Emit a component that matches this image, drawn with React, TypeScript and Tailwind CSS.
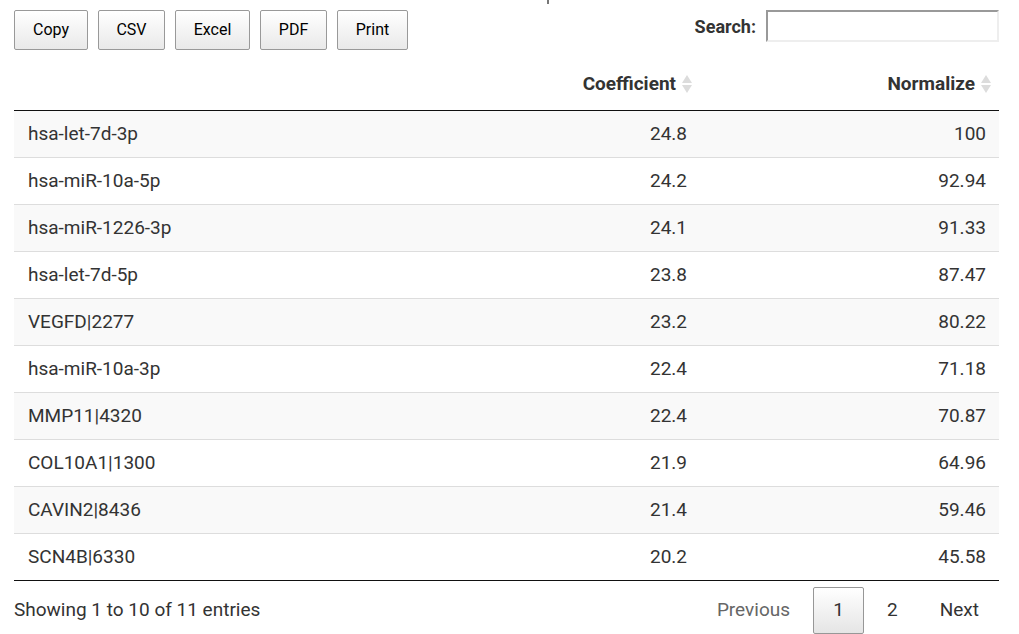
const rows = [
  { name: "hsa-let-7d-3p", coef: "24.8", norm: "100" },
  { name: "hsa-miR-10a-5p", coef: "24.2", norm: "92.94" },
  { name: "hsa-miR-1226-3p", coef: "24.1", norm: "91.33" },
  { name: "hsa-let-7d-5p", coef: "23.8", norm: "87.47" },
  { name: "VEGFD|2277", coef: "23.2", norm: "80.22" },
  { name: "hsa-miR-10a-3p", coef: "22.4", norm: "71.18" },
  { name: "MMP11|4320", coef: "22.4", norm: "70.87" },
  { name: "COL10A1|1300", coef: "21.9", norm: "64.96" },
  { name: "CAVIN2|8436", coef: "21.4", norm: "59.46" },
  { name: "SCN4B|6330", coef: "20.2", norm: "45.58" },
];

const buttons = [
  { label: "Copy", w: "w-[74px]" },
  { label: "CSV", w: "w-[67px]" },
  { label: "Excel", w: "w-[75px]" },
  { label: "PDF", w: "w-[67px]" },
  { label: "Print", w: "w-[71px]" },
];

function SortIcon() {
  return (
    <svg width="12" height="20" viewBox="0 0 12 20" className="ml-[5px] shrink-0">
      <path d="M6 1 L11 9 L1 9 Z" fill="#dcdcdc" />
      <path d="M6 19 L11 11 L1 11 Z" fill="#dcdcdc" />
    </svg>
  );
}

export default function App() {
  return (
    <div
      className="w-[1019px] h-[634px] bg-white text-[#333] overflow-hidden pl-[14px] pr-[20px] pt-[10px] relative"
      style={{ fontFamily: "Roboto, 'Liberation Sans', sans-serif" }}
    >
      <div className="absolute left-[547px] top-0 w-[2px] h-[4px] bg-[#777]" />
      <div className="flex items-start justify-between h-[47px]">
        <div className="flex gap-[10px]">
          {buttons.map((b) => (
            <button
              key={b.label}
              className={`${b.w} h-[40px] text-[16px] text-black border border-[#999] rounded-[2px] bg-gradient-to-b from-white to-[#e9e9e9]`}
            >
              {b.label}
            </button>
          ))}
        </div>
        <div className="flex items-center gap-[10px]">
          <span className="text-[18px] font-bold">Search:</span>
          <input
            className="w-[233px] h-[32px] border-2 border-t-[#999] border-l-[#999] border-b-[#eee] border-r-[#eee] outline-none"
            type="text"
          />
        </div>
      </div>

      <table className="w-[985px] border-collapse text-[19px]">
        <thead>
          <tr className="border-b border-[#111]">
            <th className="h-[53px]" />
            <th className="h-[53px] w-[300px] pr-[8px] pt-[2px] font-bold">
              <div className="flex items-center justify-end">
                Coefficient
                <SortIcon />
              </div>
            </th>
            <th className="h-[53px] w-[298px] pr-[7px] pt-[2px] font-bold">
              <div className="flex items-center justify-end">
                Normalize
                <SortIcon />
              </div>
            </th>
          </tr>
        </thead>
        <tbody>
          {rows.map((r, i) => (
            <tr
              key={r.name}
              className={`${i % 2 === 0 ? "bg-[#f9f9f9]" : "bg-white"} ${
                i === rows.length - 1 ? "border-b border-[#111]" : "border-b border-[#ddd]"
              }`}
            >
              <td className="h-[47px] pl-[14px] pt-[2px] text-left">{r.name}</td>
              <td className="h-[47px] pr-[14px] pt-[2px] text-right">{r.coef}</td>
              <td className="h-[47px] pr-[13px] pt-[2px] text-right">{r.norm}</td>
            </tr>
          ))}
        </tbody>
      </table>

      <div className="flex items-start justify-between pt-[6px] text-[19px]">
        <div className="h-[47px] flex items-center">Showing 1 to 10 of 11 entries</div>
        <div className="flex items-center h-[47px]">
          <span className="text-[#666] px-[23px]">Previous</span>
          <span className="h-[47px] w-[51px] flex items-center justify-center border border-[#979797] rounded-[2px] bg-gradient-to-b from-white to-[#e5e5e5]">
            1
          </span>
          <span className="px-[23px]">2</span>
          <span className="pl-[19px] pr-[20px]">Next</span>
        </div>
      </div>
    </div>
  );
}
